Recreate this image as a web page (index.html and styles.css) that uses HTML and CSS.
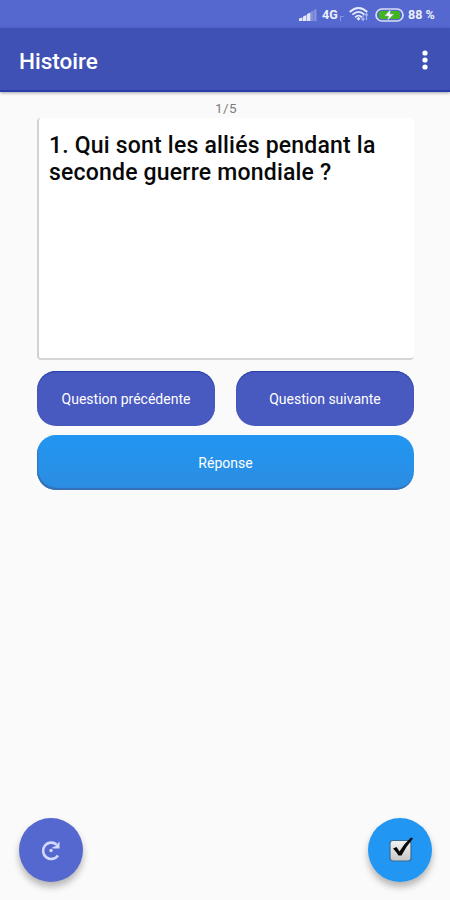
FILE: index.html
```html
<!DOCTYPE html>
<html lang="fr">
<head>
  <meta charset="UTF-8">
  <meta name="viewport" content="width=device-width, initial-scale=1.0">
  <title>Histoire</title>
  <link rel="stylesheet" href="styles.css">
</head>
<body>
  <!-- Status bar -->
  <div class="status-bar">
    <svg class="signal" width="18" height="12" viewBox="0 0 18 12">
      <path d="M0 12V9.500L3.500 8.500V12ZM4 12V7.500L7.500 6V12ZM8 12V5L11.500 3.500V12Z" fill="#e3e7fa"/>
      <path d="M12 12V2.500L14.500 1.500V12ZM15 12V1L17.500 0V12Z" fill="#8593dd"/>
    </svg>
    <span class="network">4G</span>
    <svg class="data" width="4" height="6" viewBox="0 0 4 6">
      <path d="M0.500 6V1.500H3.500" fill="none" stroke="#8d9be0"/>
    </svg>
    <svg class="wifi" width="21" height="15" viewBox="0 0 21 15">
      <g fill="none" stroke="#e8ebfb" stroke-width="1.800">
        <path d="M0.700 5Q9.500 -3 18.300 5"/>
        <path d="M3.400 7.700Q9.500 2 15.600 7.700"/>
        <path d="M6.100 10.300Q9.500 7 12.900 10.300"/>
      </g>
      <path d="M7.500 11.500L9.500 10L11.500 11.500L9.500 13.700Z" fill="#e8ebfb"/>
      <path d="M14 13V8M12.500 11.500L14 13.300L15.500 11.500M17.500 13V7M16 8.500L17.500 6.500L19 8.500" fill="none" stroke="#a7b4ee" stroke-width="1.200"/>
    </svg>
    <svg class="battery" width="29" height="14" viewBox="0 0 29 14">
      <rect x="1" y="1" width="27" height="12" rx="6" fill="#5167cf" stroke="#d9def5" stroke-width="1.700"/>
      <rect x="4" y="3" width="21" height="8" rx="2.500" fill="#42b51c"/>
      <path d="M15.500 1.500L9.500 8H13.500L12.500 12.500L19 6H15Z" fill="#fff" stroke="#7994b8" stroke-width="0.500"/>
    </svg>
    <span class="level">88 %</span>
  </div>

  <!-- App bar -->
  <header>
    <h1>Histoire</h1>
    <svg class="menu" width="6" height="20" viewBox="0 0 6 20" fill="#fff">
      <circle cx="3" cy="3" r="2.600"/>
      <circle cx="3" cy="10" r="2.600"/>
      <circle cx="3" cy="17" r="2.600"/>
    </svg>
  </header>

  <main>
    <div class="counter">1/5</div>
    <div class="question">1. Qui sont les alliés pendant la<br>seconde guerre mondiale ?</div>
    <div class="nav-buttons">
      <button class="btn">Question précédente</button>
      <button class="btn">Question suivante</button>
    </div>
    <button class="btn answer">Réponse</button>
  </main>

  <footer>
    <button class="fab restart" aria-label="Recommencer">
      <svg width="24" height="24" viewBox="0 0 24 24">
        <path d="M19 17.500A8.200 8.200 0 1 1 17.500 6.500" fill="none" stroke="#d3dafb" stroke-width="2.600"/>
        <path d="M20.500 3.500V10.500H13.500V9L16 8.500Z" fill="#d3dafb"/>
        <circle cx="12" cy="12.500" r="1.700" fill="#d3dafb"/>
      </svg>
    </button>
    <button class="fab check" aria-label="Valider">
      <svg width="28" height="28" viewBox="0 0 28 28">
        <defs>
          <linearGradient id="box" x1="0" y1="0" x2="0" y2="1">
            <stop offset="0" stop-color="#f2f2f2"/>
            <stop offset="1" stop-color="#c6c6c6"/>
          </linearGradient>
        </defs>
        <rect x="4" y="4.500" width="21" height="20.500" rx="3" fill="url(#box)" stroke="#376c97" stroke-width="1.200"/>
        <path d="M7 12.500L10.500 11L13.500 15.500Q18 7.500 25 1.500L27 2.500Q20 10.500 15.500 19.500H12.500Q10.500 16 7 12.500Z" fill="#080808"/>
      </svg>
    </button>
  </footer>
</body>
</html>
```

FILE: styles.css
```css
* {
  box-sizing: border-box;
}

body {
  margin: 0;
  height: 900px;
  display: flex;
  flex-direction: column;
  background-color: #fafafa;
  font-family: Roboto, "Liberation Sans", sans-serif;
  overflow: hidden;
}

svg {
  display: block;
  flex: none;
}

.status-bar {
  height: 28px;
  flex: none;
  display: flex;
  align-items: center;
  justify-content: flex-end;
  padding: 1px 14px 0 0;
  background-color: #5468cf;
  color: #eef0fc;
  font-size: 12.5px;
  font-weight: 700;
}

.signal {
  margin-right: 5px;
}

.network {
  width: 17px;
}

.data {
  margin: 6px 5px 0 1px;
}

.wifi {
  margin-right: 5px;
}

.battery {
  margin-right: 4px;
}

.level {
  width: 28px;
  white-space: nowrap;
}

header {
  height: 64px;
  flex: none;
  display: flex;
  align-items: center;
  justify-content: space-between;
  padding: 2px 22px 0 19px;
  background-color: #3f51b5;
  border-bottom: 2px solid #273eae;
  box-shadow: 0 1px 3px rgba(0, 0, 0, 0.35);
  color: white;
}

h1 {
  margin: 0;
  padding-top: 1px;
  font-size: 22.5px;
  font-weight: 500;
}

main {
  flex: 1;
  padding: 8px 36px 0 37px;
}

.counter {
  height: 18px;
  line-height: 16px;
  padding-left: 1px;
  text-align: center;
  font-size: 13.5px;
  letter-spacing: 0.5px;
  color: #7d7d7d;
}

.question {
  height: 242px;
  padding: 14px 10px;
  background-color: white;
  border-left: 2px solid #d2d2d2;
  border-bottom: 2px solid #d6d6d6;
  border-radius: 4px;
  font-size: 23px;
  line-height: 27px;
  font-weight: 500;
  letter-spacing: 0.2px;
  color: #080808;
  white-space: nowrap;
}

.nav-buttons {
  display: flex;
  gap: 21px;
  margin: 11px 0 9px;
}

button {
  border: none;
  padding: 0;
  font-family: inherit;
  color: white;
}

.btn {
  flex: 1;
  height: 55px;
  border-radius: 19px;
  background-color: #4859bf;
  box-shadow: inset 0 1px 1px #263faa;
  font-size: 14px;
}

.answer {
  width: 100%;
  background: linear-gradient(#2196f3, #2c8de0);
  box-shadow: inset 1px -2px 1px #3670b5;
}

footer {
  flex: none;
  display: flex;
  justify-content: space-between;
  padding: 0 18px 18px 19px;
}

.fab {
  width: 64px;
  height: 64px;
  display: flex;
  align-items: center;
  justify-content: center;
  border-radius: 50%;
  box-shadow: 0 5px 7px rgba(0, 0, 0, 0.28);
}

.restart {
  background-color: #5468cf;
}

.check {
  background-color: #2196f3;
}
```
